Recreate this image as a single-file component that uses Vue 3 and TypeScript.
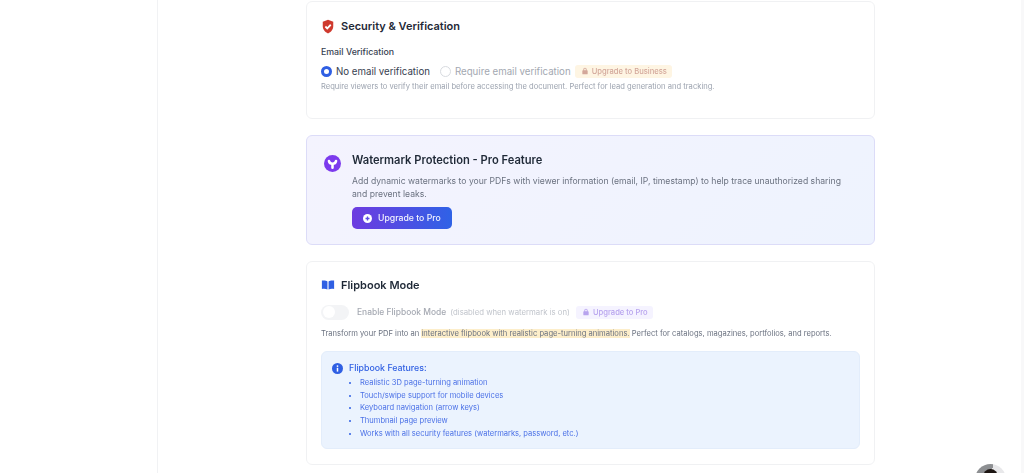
<template>
  <div class="page">
    <aside class="sidebar"></aside>
    <main class="main">
      <section class="card">
        <h3 class="card-title">
          <svg class="title-icon" viewBox="0 0 24 24" width="14" height="15" preserveAspectRatio="none">
            <path fill="#cf3a2e" d="M12 1 3 4.500v6.800c0 5.600 3.800 10.200 9 11.700 5.200-1.500 9-6.100 9-11.700V4.500z" />
            <path fill="none" stroke="#fff" stroke-width="3" d="m7.500 12 3.200 3.200 6-6" />
          </svg>
          Security &amp; Verification
        </h3>
        <div class="field-label">Email Verification</div>
        <div class="radio-row">
          <span class="radio checked"></span>
          <span class="radio-text">No email verification</span>
          <span class="radio"></span>
          <span class="radio-text muted">Require email verification</span>
          <span class="badge badge-amber">
            <svg viewBox="0 0 12 12" width="8" height="8"><path fill="currentColor" d="M3.500 5V3.500a2.500 2.500 0 0 1 5 0V5h.5a1 1 0 0 1 1 1v4a1 1 0 0 1-1 1H3a1 1 0 0 1-1-1V6a1 1 0 0 1 1-1zm1.300 0h2.400V3.500a1.200 1.200 0 0 0-2.400 0z" /></svg>
            Upgrade to Business
          </span>
        </div>
        <p class="hint">Require viewers to verify their email before accessing the document. Perfect for lead generation and tracking.</p>
      </section>

      <section class="promo">
        <div class="promo-icon">
          <svg viewBox="0 0 24 24" width="17" height="17">
            <circle cx="12" cy="12" r="12" fill="#7c3aed" />
            <path fill="none" stroke="#fff" stroke-width="3.600" stroke-linecap="round" d="M7 8.500c.5 2.500 2.500 4 5 4s4.500-1.500 5-4M12 12.500V18" />
          </svg>
        </div>
        <div>
          <h3 class="promo-title">Watermark Protection - Pro Feature</h3>
          <p class="promo-text">Add dynamic watermarks to your PDFs with viewer information (email, IP, timestamp) to help trace unauthorized sharing and prevent leaks.</p>
          <button class="upgrade-btn" type="button">
            <svg viewBox="0 0 16 16" width="9" height="9">
              <circle cx="8" cy="8" r="8" fill="#fff" />
              <path stroke="#5b4ae6" stroke-width="2.400" d="M8 4.500v7M4.500 8h7" />
            </svg>
            Upgrade to Pro
          </button>
        </div>
      </section>

      <section class="card flipbook">
        <h3 class="card-title">
          <svg class="title-icon" viewBox="0 0 24 18" width="14" height="10">
            <path fill="#2f5fe3" d="M1 1C4.500.4 8.500.6 11 2.500V17c-2.500-1.500-6.500-1.800-10-1zM23 1C19.500.4 15.500.6 13 2.500V17c2.500-1.500 6.500-1.800 10-1z" />
          </svg>
          Flipbook Mode
        </h3>
        <div class="toggle-row">
          <span class="toggle"><span class="knob"></span></span>
          <span class="toggle-label">Enable Flipbook Mode</span>
          <small class="toggle-note">(disabled when watermark is on)</small>
          <span class="badge badge-purple">
            <svg viewBox="0 0 12 12" width="8" height="8"><path fill="currentColor" d="M3.500 5V3.500a2.500 2.500 0 0 1 5 0V5h.5a1 1 0 0 1 1 1v4a1 1 0 0 1-1 1H3a1 1 0 0 1-1-1V6a1 1 0 0 1 1-1zm1.300 0h2.400V3.500a1.200 1.200 0 0 0-2.400 0z" /></svg>
            Upgrade to Pro
          </span>
        </div>
        <p class="hint dark">Transform your PDF into an <mark>interactive flipbook with realistic page-turning animations.</mark> Perfect for catalogs, magazines, portfolios, and reports.</p>
        <div class="info-box">
          <svg class="info-icon" viewBox="0 0 16 16" width="11" height="11">
            <circle cx="8" cy="8" r="8" fill="#2f5fe3" />
            <circle cx="8" cy="4.500" r="1.300" fill="#fff" />
            <path stroke="#fff" stroke-width="2.200" d="M8 7v5.500" />
          </svg>
          <div>
            <div class="info-title">Flipbook Features:</div>
            <ul class="info-list">
              <li v-for="item in features" :key="item">{{ item }}</li>
            </ul>
          </div>
        </div>
      </section>
    </main>
    <aside class="right-rail"></aside>
    <div class="avatar"><span class="avatar-head"></span></div>
  </div>
</template>

<script setup lang="ts">
const features: string[] = [
  'Realistic 3D page-turning animation',
  'Touch/swipe support for mobile devices',
  'Keyboard navigation (arrow keys)',
  'Thumbnail page preview',
  'Works with all security features (watermarks, password, etc.)',
]
</script>

<style>
html,
body {
  margin: 0;
  background: #fff;
  overflow: hidden;
}
</style>

<style scoped>
.page {
  position: relative;
  display: flex;
  height: 473px;
  overflow: hidden;
  font-family: Inter, "Liberation Sans", sans-serif;
  color: #1f2937;
  filter: blur(0.35px);
}

.sidebar {
  width: 158px;
  flex: none;
  border-right: 1px solid #f1f2f4;
  box-sizing: border-box;
}

.main {
  width: 569px;
  margin-left: 148px;
  padding-top: 1px;
  display: flex;
  flex-direction: column;
  gap: 16px;
  flex: none;
}

.right-rail {
  margin-left: auto;
  width: 3px;
  background: #f8f8f9;
}

.card {
  box-sizing: border-box;
  height: 118px;
  padding: 15px 14px;
  background: #fff;
  border: 1px solid #f0f1f3;
  border-radius: 6px;
}

.flipbook {
  height: 204px;
  padding-top: 14px;
}

.card-title {
  display: flex;
  align-items: center;
  gap: 6px;
  margin: 0;
  height: 18px;
  font-size: 11px;
  line-height: 18px;
  font-weight: 600;
  color: #1f2937;
}

.title-icon {
  flex: none;
}

.field-label {
  margin-top: 10px;
  font-size: 8.800px;
  line-height: 14px;
  font-weight: 500;
  color: #374151;
}

.radio-row {
  display: flex;
  align-items: center;
  margin-top: 4px;
  height: 16px;
}

.radio {
  box-sizing: border-box;
  width: 11px;
  height: 11px;
  border: 1px solid #d8dbe0;
  border-radius: 50%;
  flex: none;
  margin-right: 4px;
}

.radio.checked {
  border: 3px solid #2f5fe3;
}

.radio-text {
  font-size: 9.700px;
  color: #374151;
  margin-right: 10px;
  white-space: nowrap;
}

.radio-text.muted {
  color: #a3a8b1;
  margin-right: 4px;
}

.badge {
  display: inline-flex;
  align-items: center;
  gap: 3px;
  height: 13px;
  padding: 0 5px 0 6px;
  border-radius: 3px;
  font-size: 7.600px;
  font-weight: 500;
  white-space: nowrap;
}

.badge-amber {
  background: #fef5e3;
  color: #d3a79a;
}

.badge-purple {
  background: #f5f3ff;
  color: #b7a3ee;
  margin-left: 6px;
}

.hint {
  margin: 2px 0 0;
  font-size: 7.600px;
  line-height: 12px;
  color: #9ca3af;
}

.hint.dark {
  margin-top: 8px;
  color: #6b7280;
}

mark {
  background: #fdeeca;
  color: inherit;
}

.promo {
  box-sizing: border-box;
  display: flex;
  gap: 10px;
  height: 110px;
  padding: 15px 18px 15px 15px;
  background: linear-gradient(135deg, #f4f3fe, #eef3fe);
  border: 1px solid #dcdcf8;
  border-radius: 6px;
}

.promo-icon {
  width: 20px;
  padding-top: 4px;
  display: flex;
  justify-content: center;
  align-items: flex-start;
  flex: none;
}

.promo-title {
  margin: 0;
  font-size: 11.150px;
  line-height: 18px;
  font-weight: 600;
  color: #1f2937;
}

.promo-text {
  margin: 6px 0 0;
  font-size: 8.650px;
  line-height: 13px;
  color: #6b7280;
}

.upgrade-btn {
  display: flex;
  align-items: center;
  gap: 6px;
  width: 100px;
  height: 22px;
  margin-top: 6px;
  padding: 0 11px;
  border: none;
  border-radius: 5px;
  background: linear-gradient(90deg, #6d3be0, #2f62e6);
  color: #f3f4fe;
  font-family: inherit;
  font-size: 8.700px;
  font-weight: 500;
  white-space: nowrap;
}

.toggle-row {
  display: flex;
  align-items: center;
  margin-top: 10px;
  height: 16px;
}

.toggle {
  position: relative;
  width: 28px;
  height: 15px;
  border-radius: 8px;
  background: #f3f4f6;
  margin-right: 8px;
  flex: none;
}

.knob {
  position: absolute;
  left: 1.500px;
  top: 1.500px;
  width: 12px;
  height: 12px;
  border-radius: 50%;
  background: #fff;
}

.toggle-label {
  font-size: 8.450px;
  font-weight: 500;
  color: #a5a9b2;
  white-space: nowrap;
}

.toggle-note {
  margin-left: 4px;
  font-size: 7.750px;
  color: #c0c4cb;
  white-space: nowrap;
}

.info-box {
  box-sizing: border-box;
  display: flex;
  gap: 6px;
  height: 98px;
  margin-top: 11px;
  padding: 9px 10px;
  background: #ebf3fe;
  border: 1px solid #e3edfb;
  border-radius: 6px;
}

.info-icon {
  margin-top: 2px;
  flex: none;
}

.info-title {
  font-size: 8.800px;
  line-height: 14px;
  font-weight: 500;
  color: #2f5fe3;
}

.info-list {
  margin: 2px 0 0;
  padding: 0 0 0 11px;
  font-size: 7.550px;
  line-height: 12.700px;
  color: #4a70e6;
}

.info-list li::marker {
  color: #2f5fe3;
}

.avatar {
  position: absolute;
  left: 975px;
  top: 464px;
  width: 31px;
  height: 31px;
  border-radius: 50%;
  background: linear-gradient(100deg, #8d8f92 0 50%, #e8e8ea 50%);
  overflow: hidden;
}

.avatar-head {
  position: absolute;
  left: 8px;
  top: 5px;
  width: 15px;
  height: 15px;
  border-radius: 50%;
  background: #1c1512;
}
</style>
